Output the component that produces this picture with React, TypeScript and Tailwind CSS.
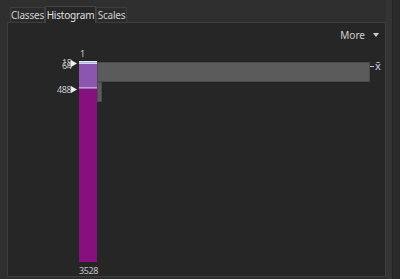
import React from "react";

export default function App() {
  const font = { fontFamily: '"Noto Sans", "Open Sans", sans-serif' };
  return (
    <div className="w-[400px] h-[279px] bg-[#2f2f2f] flex overflow-hidden text-[#d4d4d4]" style={font}>
      <div className="flex-1 flex flex-col pl-[7px] pt-[4px] pb-[2px]">
        <div className="flex items-end h-[18px] pl-[3px] text-[10px] leading-none">
          <div className="w-[35px] h-[15px] flex items-center justify-center bg-[#2b2b2b] border border-b-0 border-[#3d3d3d] text-[#cfcfcf] tracking-[-0.2px]">Classes</div>
          <div className="w-[51px] h-[17px] flex items-center justify-center bg-[#262626] border border-b-0 border-[#444] text-[#e0e0e0] relative top-[1px] z-10 tracking-[-0.2px]">Histogram</div>
          <div className="w-[31px] h-[15px] flex items-center justify-center bg-[#2b2b2b] border border-b-0 border-[#3d3d3d] text-[#cfcfcf] tracking-[-0.2px]">Scales</div>
        </div>
        <div className="flex-1 bg-[#262626] border border-[#3d3d3d] relative">
          <div className="absolute right-[6px] top-[7px] flex items-center gap-[8px] text-[10px] leading-none text-[#d0d0d0]">
            <span>More</span>
            <svg width="6" height="4" viewBox="0 0 6 4"><path d="M0 0H6L3 4Z" fill="#d0d0d0" /></svg>
          </div>
          {/* chart canvas */}
          <div className="absolute left-0 top-0 w-full h-full text-[9px] leading-none text-[#c8c8c8] tracking-[-0.4px]">
            <span className="absolute left-[72px] top-[26px]">1</span>
            <span className="absolute left-[54px] top-[35px]">18</span>
            <span className="absolute left-[54px] top-[38px]">64</span>
            <span className="absolute left-[49px] top-[62px]">488</span>
            <svg className="absolute left-[63px] top-[37px]" width="6" height="7" viewBox="0 0 6 7"><path d="M0 0L6 3.5L0 7Z" fill="#eee" /></svg>
            <svg className="absolute left-[63px] top-[63px]" width="6" height="7" viewBox="0 0 6 7"><path d="M0 0L6 3.5L0 7Z" fill="#eee" /></svg>
            {/* bar */}
            <div className="absolute left-[71px] top-[38px] w-[18px] h-[201px] flex flex-col">
              <div className="h-[1px] bg-[#e8e8f0]" />
              <div className="h-[1px] bg-[#a8b8e8]" />
              <div className="h-[1px] bg-[#d8d8f0]" />
              <div className="h-[23px] bg-[#8c56ae]" />
              <div className="h-[1px] bg-[#c0a0d0]" />
              <div className="h-[1px] bg-[#9a70b8]" />
              <div className="flex-1 bg-[#86117e]" />
            </div>
            {/* gray bars */}
            <div className="absolute left-[89px] top-[39px] w-[273px] h-[20px] bg-[#5b5b5b] border border-[#4a4a4a]" />
            <div className="absolute left-[89px] top-[59px] w-[5px] h-[20px] bg-[#5b5b5b] border border-[#4a4a4a]" />
            <div className="absolute left-[362px] top-[43px] w-[4px] h-[1px] bg-[#bbb]" />
            <span className="absolute left-[367px] top-[37px] text-[11px] text-[#c8d0e0]">x̄</span>
            <span className="absolute left-[71px] top-[243px]">3528</span>
          </div>
        </div>
      </div>
      <div className="w-[6px] bg-[#343434]" />
      <div className="w-[8px] bg-[#2a2a2a] border-l border-[#252525]" />
    </div>
  );
}
